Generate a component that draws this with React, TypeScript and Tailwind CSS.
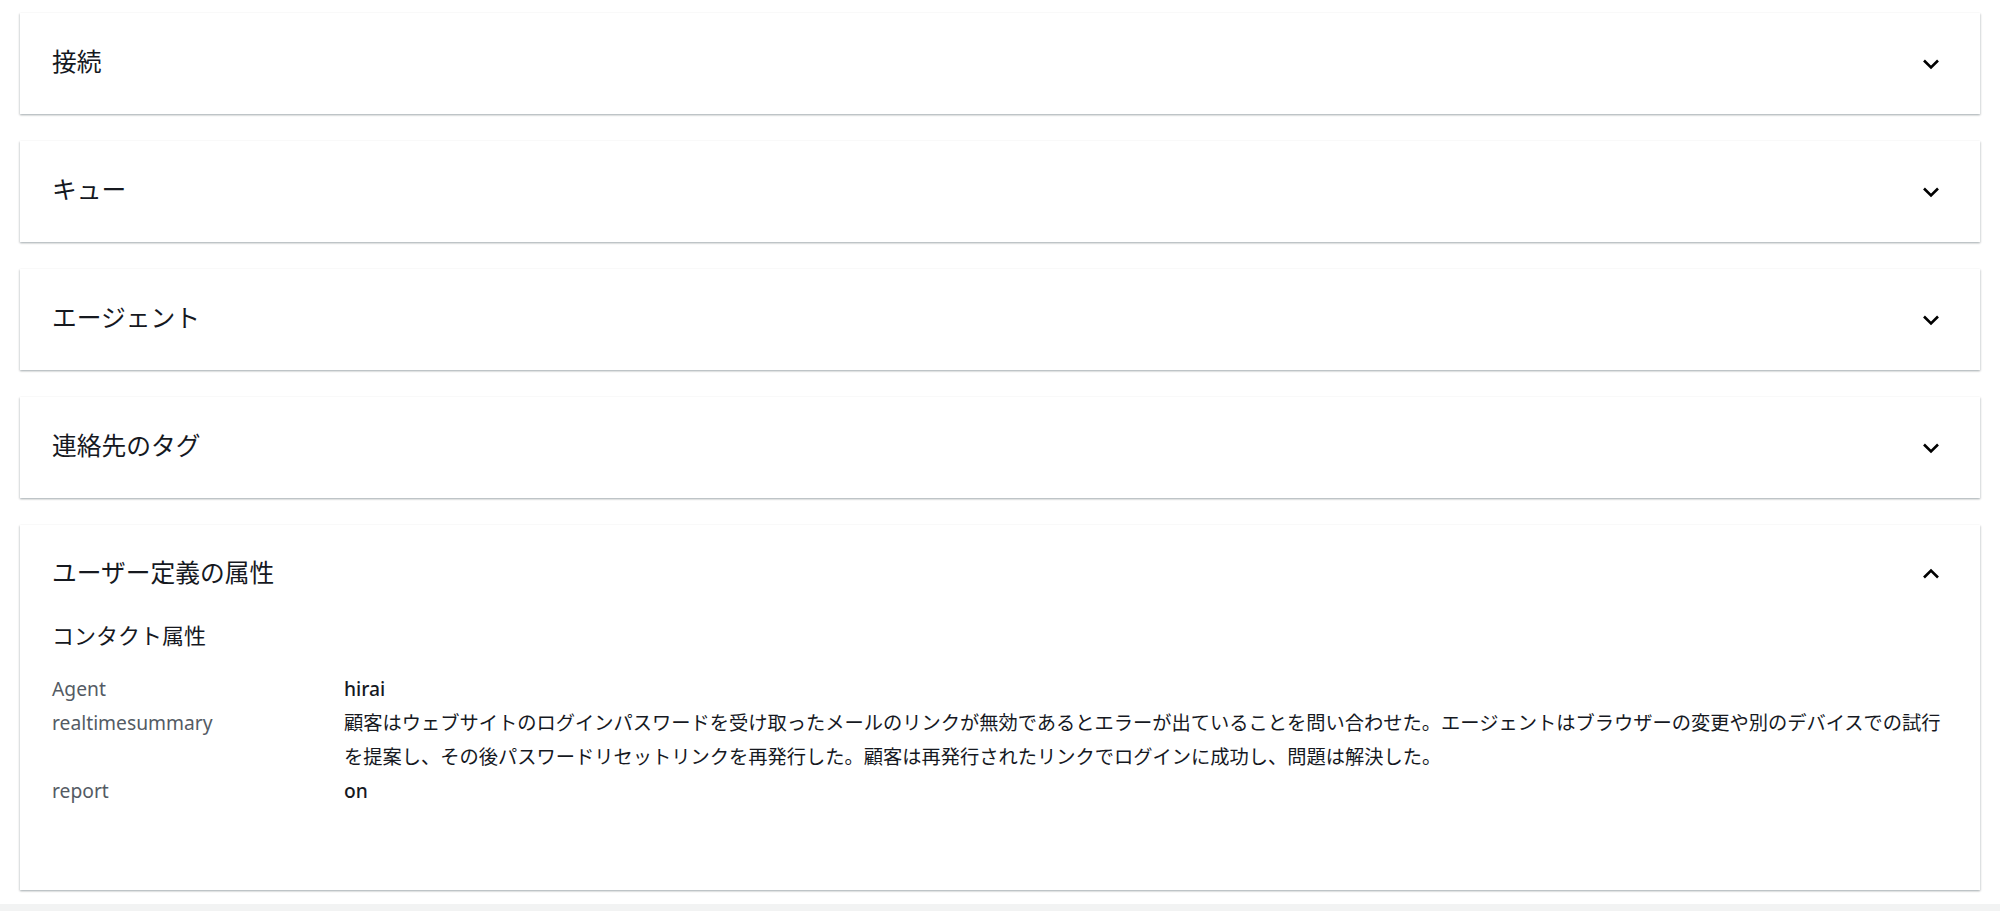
import React from 'react';

const font = '[font-family:"Noto_Sans","Noto_Sans_CJK_JP",sans-serif]';

const Chevron = ({ up = false }: { up?: boolean }) => (
  <svg width="18" height="18" viewBox="0 0 18 18" className="shrink-0">
    <path
      d={up ? 'M2 12.5 L9 5.5 L16 12.5' : 'M2 5.5 L9 12.5 L16 5.5'}
      fill="none"
      stroke="#000"
      strokeWidth="2.6"
      strokeLinejoin="miter"
    />
  </svg>
);

const CollapsedCard = ({ title }: { title: string }) => (
  <div className="bg-white shadow-[0_1px_2px_0_rgba(0,28,36,0.25),1px_1px_2px_0_rgba(0,28,36,0.08),-1px_1px_2px_0_rgba(0,28,36,0.08)]">
    <div className="flex h-[101px] items-center justify-between pl-[32px] pr-[40px]">
      <span className="-mt-[4px] text-[24.75px] leading-[32px] text-[#16191f]">{title}</span>
      <Chevron />
    </div>
  </div>
);

const attributes = [
  { key: 'Agent', value: 'hirai', strong: true },
  {
    key: 'realtimesummary',
    value:
      '顧客はウェブサイトのログインパスワードを受け取ったメールのリンクが無効であるとエラーが出ていることを問い合わせた。エージェントはブラウザーの変更や別のデバイスでの試行を提案し、その後パスワードリセットリンクを再発行した。顧客は再発行されたリンクでログインに成功し、問題は解決した。',
    strong: false,
  },
  { key: 'report', value: 'on', strong: true },
];

const App = () => {
  return (
    <div className={`min-h-screen bg-[#f2f3f3] ${font}`}>
      <div className="flex flex-col gap-[27px] bg-white px-[20px] pt-[13px] pb-[14px]">
        <CollapsedCard title="接続" />
        <CollapsedCard title="キュー" />
        <CollapsedCard title="エージェント" />
        <CollapsedCard title="連絡先のタグ" />

        <div className="bg-white pb-[82px] shadow-[0_1px_2px_0_rgba(0,28,36,0.25),1px_1px_2px_0_rgba(0,28,36,0.08),-1px_1px_2px_0_rgba(0,28,36,0.08)]">
          <div className="flex h-[98px] items-center justify-between pl-[32px] pr-[40px]">
            <span className="-mt-[2px] text-[24.75px] leading-[32px] text-[#16191f]">ユーザー定義の属性</span>
            <Chevron up />
          </div>
          <div className="pl-[32px] pr-[32px]">
            <h3 className="text-[22px] leading-[24px] text-[#16191f]">コンタクト属性</h3>
            <div className="mt-[25px] flex flex-col">
              {attributes.map((a) => (
                <div key={a.key} className="flex text-[19.25px] leading-[34px]">
                  <div className="w-[292px] shrink-0 text-[#545b64]">{a.key}</div>
                  <div className={a.strong ? 'font-medium text-[#16191f]' : 'text-[#16191f]'}>
                    {a.value}
                  </div>
                </div>
              ))}
            </div>
          </div>
        </div>
      </div>
    </div>
  );
};

export default App;
